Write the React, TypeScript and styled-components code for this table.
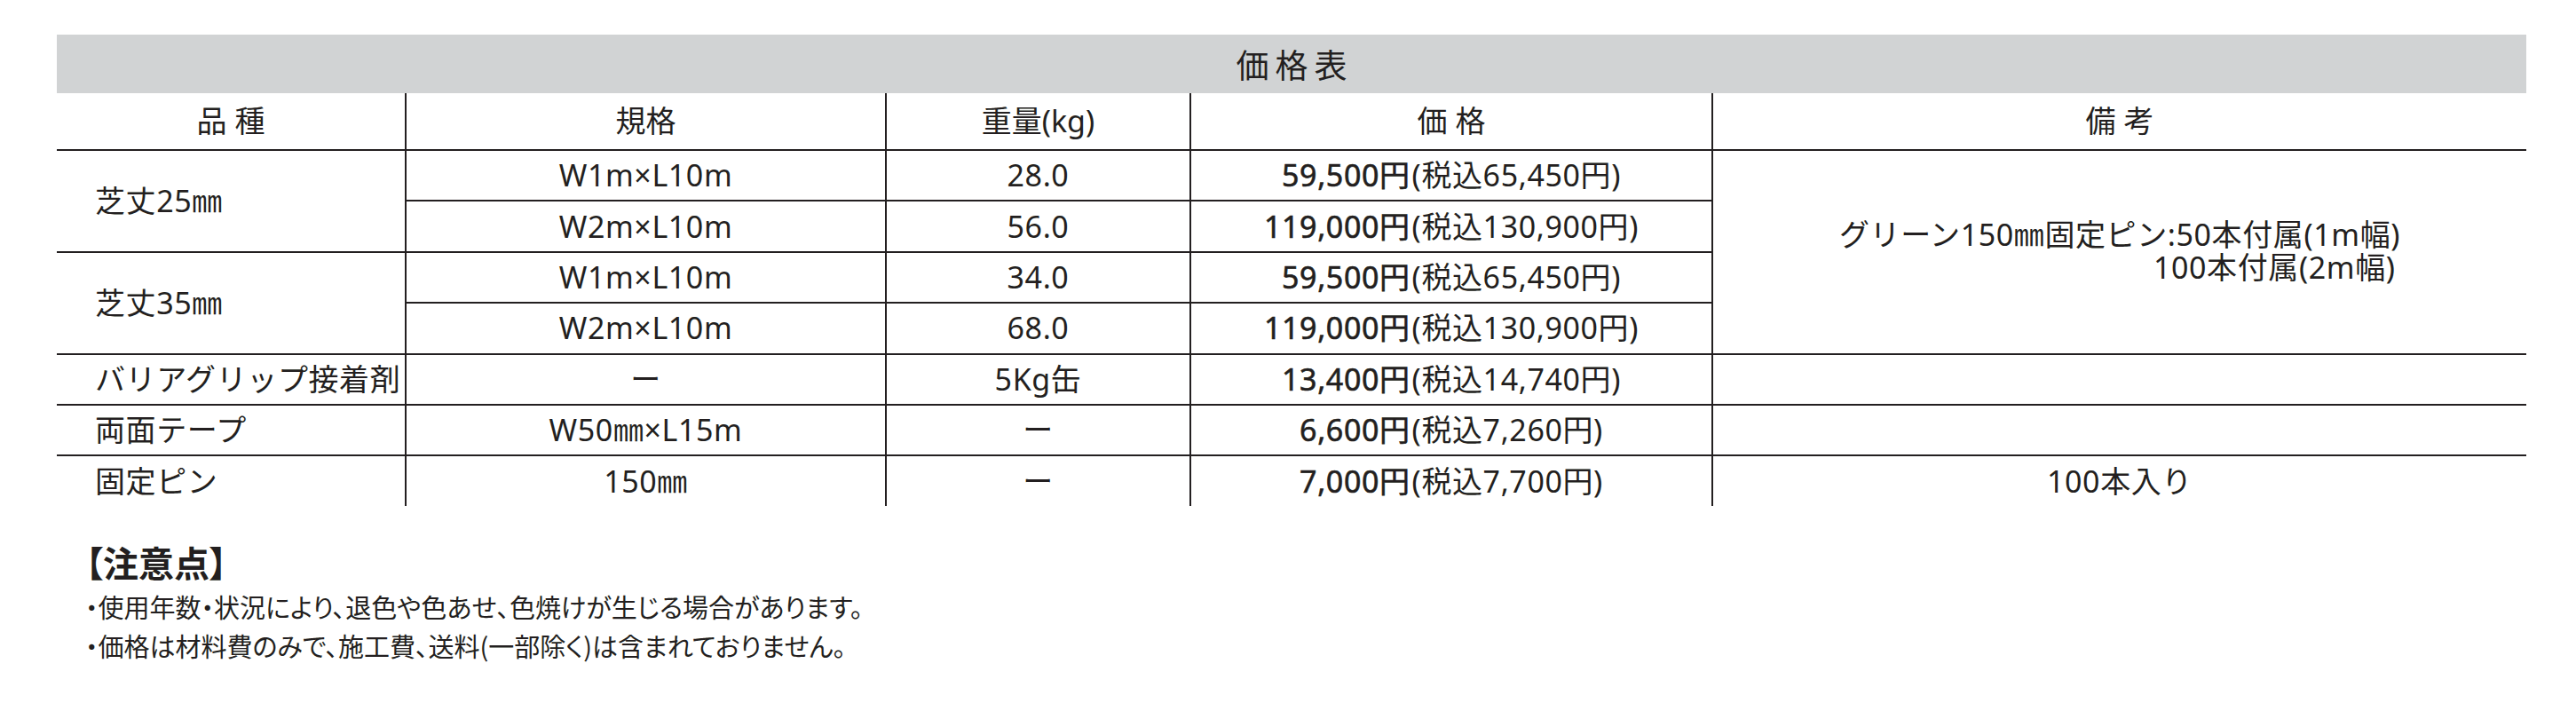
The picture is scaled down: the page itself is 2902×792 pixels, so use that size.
import React from "react";
import styled, { createGlobalStyle } from "styled-components";

const GlobalStyle = createGlobalStyle`
  body {
    margin: 0;
    background: #ffffff;
    color: #231f20;
    font-family: "Noto Sans", "Noto Sans CJK JP", sans-serif;
  }
`;

const Page = styled.div`
  padding: 39px 56px 40px 64px;
  width: 2782px;
`;

const Caption = styled.div`
  height: 66px;
  background: #d1d3d4;
  display: flex;
  align-items: center;
  justify-content: center;
  font-family: "Noto Sans CJK JP", sans-serif;
  font-size: 37px;
  letter-spacing: 7px;
  padding-left: 7px;
`;

const Table = styled.table`
  width: 2782px;
  border-collapse: collapse;
  table-layout: fixed;
  font-size: 34px;
  line-height: 1.2;
`;

const Th = styled.th<{ $lead?: boolean }>`
  height: 63px;
  padding: 0;
  font-weight: 400;
  text-align: center;
  border-bottom: 2px solid #231f20;
  border-left: ${(p) => (p.$lead ? "none" : "2px solid #231f20")};
`;

const Td = styled.td<{ $lead?: boolean; $last?: boolean }>`
  height: 55.4px;
  padding: 0 0 0 ${(p) => (p.$lead ? "43px" : "0")};
  text-align: ${(p) => (p.$lead ? "left" : "center")};
  vertical-align: middle;
  letter-spacing: 0.6px;
  white-space: nowrap;
  border-bottom: ${(p) => (p.$last ? "none" : "2px solid #231f20")};
  border-left: ${(p) => (p.$lead ? "none" : "2px solid #231f20")};
`;

const Main = styled.span`
  font-weight: 400;
  margin-right: 2px;
  -webkit-text-stroke: 0.6px #231f20;
`;

const Tax = styled.span`
  font-weight: 400;
`;

const NoteBlock = styled.div`
  display: inline-block;
  text-align: left;
  line-height: 37px;
`;

const NoteLine = styled.div<{ $indent?: number }>`
  padding-left: ${(p) => p.$indent ?? 0}px;
  white-space: nowrap;
`;

const Notice = styled.section`
  margin-top: 38px;
  padding-left: 32px;
  font-family: "Noto Sans CJK JP", sans-serif;
  font-feature-settings: "palt";
`;

const NoticeTitle = styled.h2`
  margin: 0 0 3px 0;
  font-size: 40px;
  font-weight: 700;
  line-height: 50px;
`;

const NoticeText = styled.p`
  margin: 0;
  font-size: 29px;
  line-height: 44px;
`;

type Item = {
  name?: string;
  span?: number;
  size: string;
  weight: string;
  price: string;
  tax: string;
};

const items: Item[] = [
  { name: "芝丈25㎜", span: 2, size: "W1m×L10m", weight: "28.0", price: "59,500円", tax: "(税込65,450円)" },
  { size: "W2m×L10m", weight: "56.0", price: "119,000円", tax: "(税込130,900円)" },
  { name: "芝丈35㎜", span: 2, size: "W1m×L10m", weight: "34.0", price: "59,500円", tax: "(税込65,450円)" },
  { size: "W2m×L10m", weight: "68.0", price: "119,000円", tax: "(税込130,900円)" },
];

function Price({ main, tax }: { main: string; tax: string }) {
  return (
    <>
      <Main>{main}</Main>
      <Tax>{tax}</Tax>
    </>
  );
}

export default function App() {
  return (
    <>
      <GlobalStyle />
      <Page>
        <Caption>価格表</Caption>
        <Table>
          <colgroup>
            <col style={{ width: 393 }} />
            <col style={{ width: 541 }} />
            <col style={{ width: 343 }} />
            <col style={{ width: 588 }} />
            <col style={{ width: 917 }} />
          </colgroup>
          <thead>
            <tr>
              <Th $lead>品 種</Th>
              <Th>規格</Th>
              <Th>重量(kg)</Th>
              <Th>価 格</Th>
              <Th>備 考</Th>
            </tr>
          </thead>
          <tbody>
            {items.map((it, i) => (
              <tr key={i}>
                {it.name && (
                  <Td $lead rowSpan={it.span}>
                    {it.name}
                  </Td>
                )}
                <Td>{it.size}</Td>
                <Td>{it.weight}</Td>
                <Td>
                  <Price main={it.price} tax={it.tax} />
                </Td>
                {i === 0 && (
                  <Td rowSpan={4}>
                    <NoteBlock>
                      <NoteLine>グリーン150㎜固定ピン:50本付属(1m幅)</NoteLine>
                      <NoteLine $indent={354}>100本付属(2m幅)</NoteLine>
                    </NoteBlock>
                  </Td>
                )}
              </tr>
            ))}
            <tr>
              <Td $lead>バリアグリップ接着剤</Td>
              <Td>ー</Td>
              <Td>5Kg缶</Td>
              <Td>
                <Price main="13,400円" tax="(税込14,740円)" />
              </Td>
              <Td />
            </tr>
            <tr>
              <Td $lead>両面テープ</Td>
              <Td>W50㎜×L15m</Td>
              <Td>ー</Td>
              <Td>
                <Price main="6,600円" tax="(税込7,260円)" />
              </Td>
              <Td />
            </tr>
            <tr>
              <Td $lead $last>固定ピン</Td>
              <Td $last>150㎜</Td>
              <Td $last>ー</Td>
              <Td $last>
                <Price main="7,000円" tax="(税込7,700円)" />
              </Td>
              <Td $last>100本入り</Td>
            </tr>
          </tbody>
        </Table>
        <Notice>
          <NoticeTitle>【注意点】</NoticeTitle>
          <NoticeText>・使用年数・状況により、退色や色あせ、色焼けが生じる場合があります。</NoticeText>
          <NoticeText>・価格は材料費のみで、施工費、送料(一部除く)は含まれておりません。</NoticeText>
        </Notice>
      </Page>
    </>
  );
}
